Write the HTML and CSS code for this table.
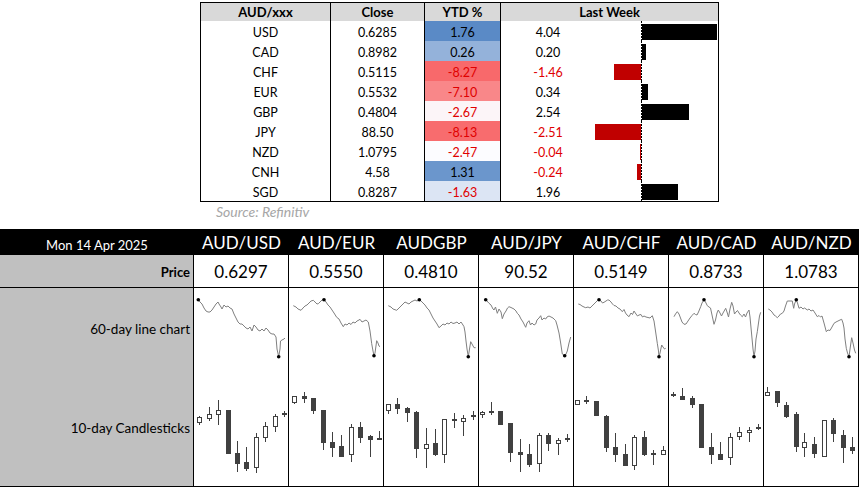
FILE: index.html
```html
<!DOCTYPE html>
<html lang="en">
<head>
<meta charset="utf-8">
<title>AUD crosses</title>
<link rel="stylesheet" href="styles.css">
</head>
<body>
<section class="top">
  <div class="fx">
    <div class="h c1">AUD/xxx</div>
    <div class="h c2">Close</div>
    <div class="h c3">YTD %</div>
    <div class="h c45">Last Week</div>

    <div class="d c1">USD</div><div class="d c2">0.6285</div><div class="d c3" style="background:#5A8AC6">1.76</div><div class="d c4">4.04</div><div class="d c5"><i class="bar pos" style="width:75px"></i></div>
    <div class="d c1">CAD</div><div class="d c2">0.8982</div><div class="d c3" style="background:#94B2DA">0.26</div><div class="d c4">0.20</div><div class="d c5"><i class="bar pos" style="width:4px"></i></div>
    <div class="d c1">CHF</div><div class="d c2">0.5115</div><div class="d c3 neg" style="background:#F8696B">-8.27</div><div class="d c4 neg">-1.46</div><div class="d c5"><i class="bar negb" style="width:27px;margin-left:19px"></i></div>
    <div class="d c1">EUR</div><div class="d c2">0.5532</div><div class="d c3 neg" style="background:#F98789">-7.10</div><div class="d c4">0.34</div><div class="d c5"><i class="bar pos" style="width:6px"></i></div>
    <div class="d c1">GBP</div><div class="d c2">0.4804</div><div class="d c3 neg" style="background:#FCF5F8">-2.67</div><div class="d c4">2.54</div><div class="d c5"><i class="bar pos" style="width:47px"></i></div>
    <div class="d c1">JPY</div><div class="d c2">88.50</div><div class="d c3 neg" style="background:#F86C6E">-8.13</div><div class="d c4 neg">-2.51</div><div class="d c5"><i class="bar negb" style="width:46px;margin-left:0px"></i></div>
    <div class="d c1">NZD</div><div class="d c2">1.0795</div><div class="d c3 neg" style="background:#FCFCFF">-2.47</div><div class="d c4 neg">-0.04</div><div class="d c5"><i class="bar negb" style="width:1px;margin-left:45px"></i></div>
    <div class="d c1">CNH</div><div class="d c2">4.58</div><div class="d c3" style="background:#6B96CC">1.31</div><div class="d c4 neg">-0.24</div><div class="d c5"><i class="bar negb" style="width:4px;margin-left:42px"></i></div>
    <div class="d c1">SGD</div><div class="d c2">0.8287</div><div class="d c3 neg" style="background:#DCE5F4">-1.63</div><div class="d c4">1.96</div><div class="d c5"><i class="bar pos" style="width:36px"></i></div>
  </div>
  <p class="source">Source: Refinitiv</p>
</section>

<section class="board">
  <div class="hd date">Mon 14 Apr 2025</div>
  <div class="hd pair">AUD/USD</div>
  <div class="hd pair">AUD/EUR</div>
  <div class="hd pair">AUDGBP</div>
  <div class="hd pair">AUD/JPY</div>
  <div class="hd pair">AUD/CHF</div>
  <div class="hd pair">AUD/CAD</div>
  <div class="hd pair">AUD/NZD</div>

  <div class="lbl price">Price</div>
  <div class="val num">0.6297</div>
  <div class="val num">0.5550</div>
  <div class="val num">0.4810</div>
  <div class="val num">90.52</div>
  <div class="val num">0.5149</div>
  <div class="val num">0.8733</div>
  <div class="val num">1.0783</div>

  <div class="lbl charts"><span>60-day line chart</span><span>10-day Candlesticks</span></div>

  <div class="val chart">
    <svg viewBox="0 1 94 198" width="94" height="198">
      <polyline class="line" points="4.3,12.7 6,15 8,17 10,21 12,24 14,25 16,25 18,23 20,20 22,17 24,15 25,17 27,20 28,22 30,18 32,20 34,19 36,21 38,22 40,27 42,31 44,35 46,37 48,37 50,39 52,41 54,42 56,40 58,44 60,38 62,40 64,43 66,44 68,42 70,44 72,41 74,43 76,46 78,47 80,47 82,50 83,62 84.7,69.7 86,62 86.5,54 88,53 90,52 91,51"/>
      <circle class="dot" cx="4.3" cy="12.7" r="1.8"/><circle class="dot" cx="84.7" cy="69.7" r="1.8"/>
      <path class="wick" d="M5.5 129V138M15.5 120V134M24.5 113V138M34.5 123V166M43.5 154V185M52.5 160V184M62.5 146V186M71.5 135V155M81.5 127V145M90.5 124V130"/>
      <rect class="up" x="3.5" y="130.5" width="4" height="5"/>
      <rect class="up" x="13.5" y="127.5" width="4" height="4"/>
      <rect class="up" x="22.5" y="123.5" width="4" height="4"/>
      <rect class="dn" x="32.5" y="123.5" width="4" height="43"/>
      <rect class="dn" x="41.5" y="166.5" width="4" height="10"/>
      <rect class="dn" x="50.5" y="175.5" width="4" height="6"/>
      <rect class="up" x="60.5" y="150.5" width="4" height="30"/>
      <rect class="up" x="69.5" y="139.5" width="4" height="11"/>
      <rect class="up" x="79.5" y="129.5" width="4" height="10"/>
      <path class="doji" d="M88 127h5"/>
    </svg>
  </div>

  <div class="val chart">
    <svg viewBox="0 1 94 198" width="94" height="198">
      <polyline class="line" points="4.3,18.7 7,20 9,22 12,23.3 14,21 16,19 18,18 20,16 22,14 24.3,13.3 26,15 28,17 29.3,16.7 31,15 33,13 35,12.7 37,15 39,18 41,20 43,23 45,26 47.7,30.3 50,32 52,36 54.3,39.7 56,37 58,38 60,36 62,37.5 64,35 66,36 68,34 70,33 71,32.3 73,35 75,34 77,33 79.3,35 81,44 82.7,56.7 84,64 85,68.7 86,66 87.7,53.7 89,56 90,59 91,59.7"/>
      <circle class="dot" cx="35" cy="12.7" r="1.8"/><circle class="dot" cx="85" cy="68.7" r="1.8"/>
      <path class="wick" d="M5.5 109V117M15.5 105V116M24.5 111V127M34.5 123V163M43.5 145V170M52.5 148V169M62.5 137V175M71.5 135V156M81.5 148V170M90.5 144V153"/>
      <rect class="up" x="3.5" y="109.5" width="4" height="6"/>
      <rect class="dn" x="13.5" y="109.5" width="4" height="2"/>
      <rect class="dn" x="22.5" y="111.5" width="4" height="12"/>
      <rect class="dn" x="32.5" y="123.5" width="4" height="32"/>
      <rect class="dn" x="41.5" y="155.5" width="4" height="5"/>
      <rect class="dn" x="50.5" y="159.5" width="4" height="10"/>
      <rect class="up" x="60.5" y="140.5" width="4" height="27"/>
      <rect class="dn" x="69.5" y="140.5" width="4" height="10"/>
      <rect class="dn" x="79.5" y="149.5" width="4" height="3"/>
      <path class="doji" d="M88 152h5"/>
    </svg>
  </div>

  <div class="val chart">
    <svg viewBox="0 1 94 198" width="94" height="198">
      <polyline class="line" points="4.3,18.7 7,20 9,22 12.7,23.3 15,21 17,19 19,17 21,15 23,16 25,17 27,15 29,14 31,13 33,14 35.3,12.7 37,14 39,16 41,18 43,21 45,23 47,27 49,31 51,34 53,37 55,40.7 57,39 59,37 61,38 63,36 65,37 67,35 69,36.5 71,36 73,35 75,37 77,35 79,38 80,39.7 81,45 82,54 83,62 84.3,69.7 85.5,62 86.7,54.7 88,57 90,60.7 91.7,60.7"/>
      <circle class="dot" cx="35.3" cy="12.7" r="1.8"/><circle class="dot" cx="84.3" cy="69.7" r="1.8"/>
      <path class="wick" d="M4.5 117V127M13.5 111V127M23.5 120V135M32.5 124V171M42.5 141V181M51.5 142V169M60.5 132V176M70.5 126V141M79.5 128V149M89.5 124V133"/>
      <rect class="up" x="2.5" y="117.5" width="4" height="6"/>
      <rect class="dn" x="11.5" y="117.5" width="4" height="4"/>
      <rect class="dn" x="21.5" y="121.5" width="4" height="4"/>
      <rect class="dn" x="30.5" y="125.5" width="4" height="36"/>
      <rect class="up" x="40.5" y="157.5" width="4" height="4"/>
      <rect class="dn" x="49.5" y="156.5" width="4" height="11"/>
      <rect class="up" x="58.5" y="132.5" width="4" height="35"/>
      <path class="doji" d="M68 133h5"/>
      <rect class="up" x="77.5" y="131.5" width="4" height="3"/>
      <path class="doji" d="M87 129h5"/>
    </svg>
  </div>

  <div class="val chart">
    <svg viewBox="0 1 94 198" width="94" height="198">
      <polyline class="line" points="6.7,12.7 8,14 10,16.3 12,18 14,22 15,23 16.5,20 18.3,26.3 20,22 22,25 23.3,31.7 25,27 27,24 28.5,21 30,19.7 32,20.5 35,22 37,24 38.3,26.3 40,28 42,32 44,35 45.5,38 46.7,40.3 48,36 50,33.7 51.5,38 53,36 55,38 56.7,37 58,33 60,31 61.7,28.7 63,33 65,31 66.7,32 68,30 70,29 72,30 74,31 76.7,33.7 78,38 80,46 81.5,55 83.3,67 85.7,68.7 87,67 88.3,64 90,56 91.7,50"/>
      <circle class="dot" cx="6.7" cy="12.7" r="1.8"/><circle class="dot" cx="85.7" cy="68.7" r="1.8"/>
      <path class="wick" d="M3.5 124V131M12.5 115V128M21.5 124V138M31.5 136V175M41.5 152V185M50.5 157V180M60.5 146V185M69.5 146V164M79.5 151V168M88.5 147V155"/>
      <rect class="up" x="1.5" y="125.5" width="4" height="2"/>
      <path class="doji" d="M10 125h5"/>
      <rect class="dn" x="19.5" y="124.5" width="4" height="13"/>
      <rect class="dn" x="29.5" y="136.5" width="4" height="29"/>
      <rect class="dn" x="39.5" y="165.5" width="4" height="2"/>
      <rect class="dn" x="48.5" y="167.5" width="4" height="10"/>
      <rect class="up" x="58.5" y="148.5" width="4" height="28"/>
      <rect class="dn" x="67.5" y="148.5" width="4" height="8"/>
      <rect class="up" x="77.5" y="153.5" width="4" height="3"/>
      <path class="doji" d="M86 152h5"/>
    </svg>
  </div>

  <div class="val chart">
    <svg viewBox="0 1 94 198" width="94" height="198">
      <polyline class="line" points="4.3,17 6,17.5 8,19 10,20 11.7,20.7 14,20 16,21 18,19 20,17 22,15 23.5,13.5 25,12.7 27,14 28.5,16 30,15.3 32,14 33.5,13 35,13 37,15 38.5,17 40,18.5 42,19 44,21 46,22 48.3,24.7 50,22.5 51.5,26 53,28 55,29.7 57,26 58.5,27.5 60,24 62,27 63.5,29 65,28 67,27.5 68.5,30 70,29 72,30 74,30.5 76,31 78.3,28.7 80,34 81.5,44 83.3,56.3 84.5,64 85,69.7 86,66 87.7,58 89,60 90.5,62 91.7,61.3"/>
      <circle class="dot" cx="25" cy="12.7" r="1.8"/><circle class="dot" cx="85" cy="69.7" r="1.8"/>
      <path class="wick" d="M3.5 113V118M12.5 109V117M22.5 114V129M32.5 128V165M41.5 146V175M51.5 157V178M60.5 148V183M70.5 144V169M79.5 163V178M89.5 159V167"/>
      <rect class="up" x="1.5" y="113.5" width="4" height="4"/>
      <path class="doji" d="M10 114h5"/>
      <rect class="dn" x="20.5" y="114.5" width="4" height="14"/>
      <rect class="dn" x="30.5" y="129.5" width="4" height="31"/>
      <rect class="dn" x="39.5" y="160.5" width="4" height="7"/>
      <rect class="dn" x="49.5" y="167.5" width="4" height="11"/>
      <rect class="up" x="58.5" y="150.5" width="4" height="28"/>
      <rect class="dn" x="68.5" y="150.5" width="4" height="17"/>
      <path class="doji" d="M77 167h5"/>
      <rect class="up" x="87.5" y="163.5" width="4" height="4"/>
    </svg>
  </div>

  <div class="val chart">
    <svg viewBox="0 1 94 198" width="94" height="198">
      <polyline class="line" points="5,29.7 6.5,27 8.3,24.7 10,27 11.5,31 13,35 15,37.3 17,37 19,34 21,31 23,28.5 25,26.3 26.5,27.5 28,28 29.5,25 31.7,19.7 33,16 35,12.7 36.5,15 38.3,18.7 40,20 41.5,21 43,28 45,37.3 46.5,33 48,26 49.3,23 51,26 52.5,29 54,26 56.7,21.3 58,25 59.5,30 61,22 62.7,15.3 64,19 65.5,27 67,25 68.5,23.5 70,26 71.5,28 73.3,29.7 75,27 76.5,30 78,26 80,23 81,30 82.5,46 84,62 85,69.7 86,64 87,52 88.3,44.7 89.5,36 90.5,29 91.7,25.3"/>
      <circle class="dot" cx="35" cy="12.7" r="1.8"/><circle class="dot" cx="85" cy="69.7" r="1.8"/>
      <path class="wick" d="M4.5 105V110M13.5 101V112M23.5 109V121M32.5 117V160M42.5 146V177M51.5 155V173M61.5 146V178M70.5 140V153M80.5 140V155M89.5 137V143"/>
      <path class="doji" d="M2 108h5"/>
      <rect class="dn" x="11.5" y="109.5" width="4" height="3"/>
      <rect class="dn" x="21.5" y="111.5" width="4" height="6"/>
      <rect class="dn" x="30.5" y="117.5" width="4" height="43"/>
      <rect class="dn" x="40.5" y="160.5" width="4" height="7"/>
      <rect class="dn" x="49.5" y="167.5" width="4" height="5"/>
      <rect class="up" x="59.5" y="150.5" width="4" height="20"/>
      <rect class="up" x="68.5" y="145.5" width="4" height="4"/>
      <rect class="up" x="78.5" y="143.5" width="4" height="2"/>
      <path class="doji" d="M87 141h5"/>
    </svg>
  </div>

  <div class="val chart">
    <svg viewBox="0 1 94 198" width="94" height="198">
      <polyline class="line" points="4.3,22 6,23 8,25 10,28 11.5,29 13.3,30.7 15,29 16.5,27 18.3,26.3 20,24 21.5,19 23.3,14 25,14 27,14 28.3,14 29,18 29.7,21.3 30.5,17 32.3,12.7 33.5,16 35,21.3 37,20 39,22 40.5,21 42,22 43.3,23 45,22 47,24 49,23 51,26 53.3,29.7 55,28.5 56.5,30 58,29 60,36 62.3,44.7 64,43 66,43.5 68,40 70,36.3 72,35 74,34 76,33 77.7,32.3 79,36 80,41 81,52 82.3,61.3 83.5,66 85,69.7 86.3,60 87.7,50.7 89,56 90.5,63 91.7,66.3"/>
      <circle class="dot" cx="32.3" cy="12.7" r="1.8"/><circle class="dot" cx="85" cy="69.7" r="1.8"/>
      <path class="wick" d="M3.5 100V108M13.5 104V120M22.5 115V131M32.5 125V165M40.5 146V170M50.5 150V171M60.5 133V170M69.5 131V155M79.5 143V176M88.5 150V167"/>
      <rect class="up" x="1.5" y="105.5" width="4" height="3"/>
      <rect class="dn" x="11.5" y="104.5" width="4" height="11"/>
      <rect class="dn" x="20.5" y="118.5" width="4" height="11"/>
      <rect class="dn" x="30.5" y="127.5" width="4" height="32"/>
      <rect class="up" x="38.5" y="155.5" width="4" height="5"/>
      <rect class="dn" x="48.5" y="157.5" width="4" height="9"/>
      <rect class="up" x="58.5" y="133.5" width="4" height="36"/>
      <rect class="dn" x="67.5" y="133.5" width="4" height="13"/>
      <rect class="dn" x="77.5" y="148.5" width="4" height="12"/>
      <rect class="dn" x="86.5" y="160.5" width="4" height="3"/>
    </svg>
  </div>
</section>
</body>
</html>
```

FILE: styles.css
```css
* { box-sizing: border-box; }

html, body {
  margin: 0;
  padding: 0;
  background: #fff;
}

body {
  width: 859px;
  height: 488px;
  overflow: hidden;
  font-family: Lato, "Liberation Sans", sans-serif;
  color: #000;
}

/* ---------- top summary table ---------- */
.top {
  padding: 2px 0 0 200px;
}

.fx {
  display: grid;
  grid-template-columns: 130px 94px 76px 94px 124px;
  grid-template-rows: 18px repeat(9, 20px);
  width: 519px;
  border-top: 1px solid #000;
  border-left: 1px solid #000;
  border-bottom: 1px solid #000;
  font-size: 12.5px;
}

.fx .h {
  background: #d9d9d9;
  font-weight: 700;
  font-size: 13px;
  text-align: center;
  padding-top: 1px;
  line-height: 16px;
}

.fx .d {
  text-align: center;
  padding-top: 3px;
  line-height: 17px;
}

.c1, .c2, .c3, .c5, .c45 { border-right: 1px solid #000; }
.c45 { grid-column: span 2; }

.neg { color: #e00000; }

.fx .c5 {
  display: flex;
  align-items: flex-start;
  padding-top: 3px;
  background: repeating-linear-gradient(to bottom, #000 0 2px, transparent 2px 3px) no-repeat 46px 0 / 1px 100%;
}

.bar {
  display: block;
  height: 16px;
}

.bar.pos {
  background: #000;
  margin-left: 47px;
}

.bar.negb {
  background: #c00000;
}

.source {
  margin: 2px 0 0 16px;
  font-size: 14px;
  line-height: 16px;
  font-style: italic;
  color: #a6a6a6;
}

/* ---------- bottom board ---------- */
.board {
  display: grid;
  grid-template-columns: 194px repeat(7, 95px);
  grid-template-rows: 26px 33px 199px;
  margin-top: 9px;
}

.hd {
  background: #000;
  color: #fff;
  text-align: center;
}

.date {
  font-size: 13px;
  line-height: 16px;
  padding-top: 8px;
}

.pair {
  font-size: 17px;
  line-height: 22px;
  padding-top: 3px;
}

.lbl {
  background: #c0c0c0;
  border-right: 1px solid #000;
  border-bottom: 1px solid #000;
  text-align: right;
  padding-right: 3px;
}

.val {
  border-right: 1px solid #000;
  border-bottom: 1px solid #000;
}

.price {
  font-weight: 700;
  font-size: 13px;
  line-height: 16px;
  padding-top: 9px;
}

.num {
  text-align: center;
  font-size: 17px;
  line-height: 22px;
  padding-top: 6px;
}

.charts {
  display: flex;
  flex-direction: column;
  align-items: flex-end;
  gap: 83px;
  padding-top: 33px;
  font-size: 13.5px;
  line-height: 16px;
}

.chart svg {
  display: block;
}

.line {
  fill: none;
  stroke: #808080;
  stroke-width: 1;
  stroke-linejoin: round;
}

.dot { fill: #000; }

.wick {
  fill: none;
  stroke: #404040;
  stroke-width: 1;
}

.up {
  fill: #fff;
  stroke: #404040;
  stroke-width: 1;
}

.dn {
  fill: #404040;
  stroke: #404040;
  stroke-width: 1;
}

.doji {
  fill: none;
  stroke: #404040;
  stroke-width: 2;
}
```
